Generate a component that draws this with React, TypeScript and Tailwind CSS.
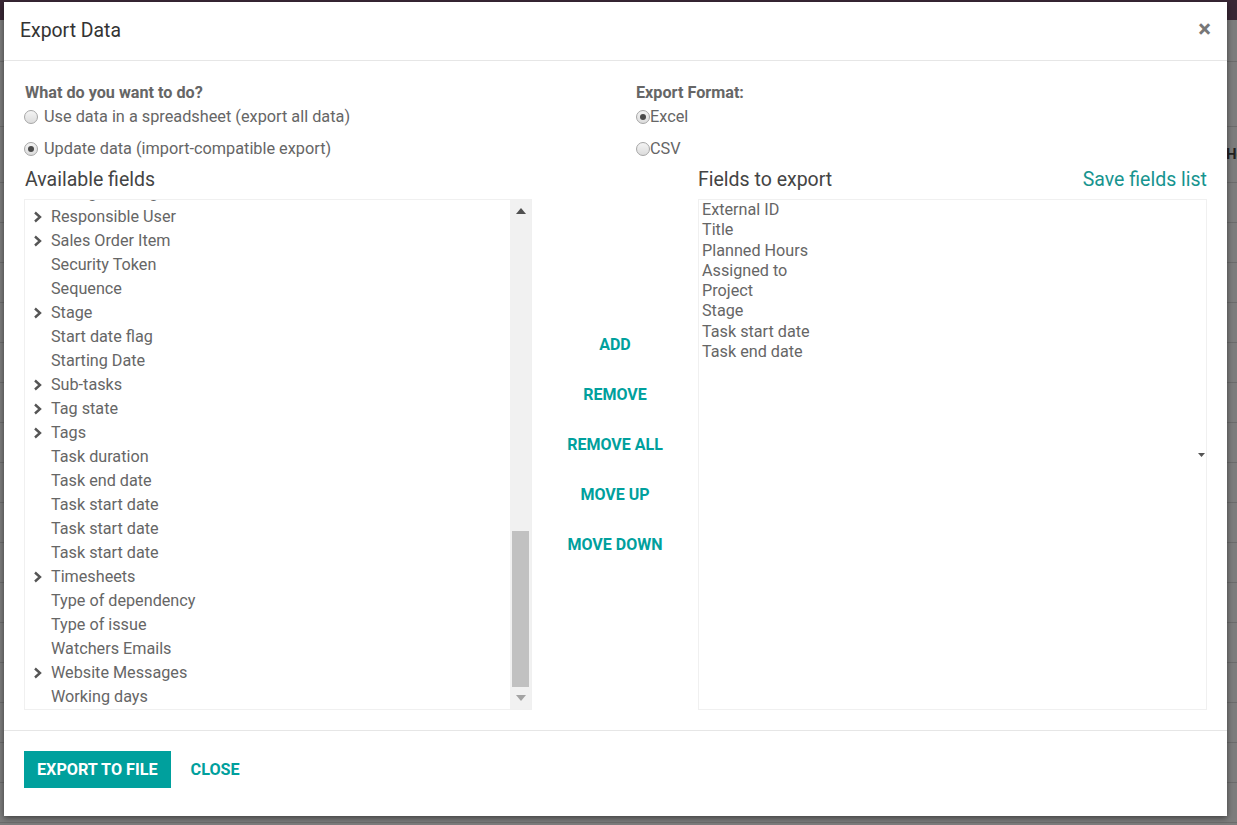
import React from 'react';

const availableFields: { name: string; expandable?: boolean }[] = [
    { name: 'Rating Message', expandable: true },
    { name: 'Responsible User', expandable: true },
    { name: 'Sales Order Item', expandable: true },
    { name: 'Security Token' },
    { name: 'Sequence' },
    { name: 'Stage', expandable: true },
    { name: 'Start date flag' },
    { name: 'Starting Date' },
    { name: 'Sub-tasks', expandable: true },
    { name: 'Tag state', expandable: true },
    { name: 'Tags', expandable: true },
    { name: 'Task duration' },
    { name: 'Task end date' },
    { name: 'Task start date' },
    { name: 'Task start date' },
    { name: 'Task start date' },
    { name: 'Timesheets', expandable: true },
    { name: 'Type of dependency' },
    { name: 'Type of issue' },
    { name: 'Watchers Emails' },
    { name: 'Website Messages', expandable: true },
    { name: 'Working days' },
];

const exportFields = [
    'External ID',
    'Title',
    'Planned Hours',
    'Assigned to',
    'Project',
    'Stage',
    'Task start date',
    'Task end date',
];

const Radio: React.FC<{ checked?: boolean }> = ({ checked }) => (
    <span className="w-[14px] h-[14px] rounded-full border border-[#a6a6a6] bg-gradient-to-b from-[#f4f4f4] to-[#dcdcdc] flex items-center justify-center shrink-0">
        {checked && <span className="w-[6px] h-[6px] rounded-full bg-[#4a4a4a]" />}
    </span>
);

const Chevron = () => (
    <svg width="10" height="12" viewBox="0 0 10 12" className="text-[#555]">
        <path d="M2 1.5 L7 6 L2 10.5" fill="none" stroke="currentColor" strokeWidth="2.4" />
    </svg>
);

const ActionButton: React.FC<{ label: string }> = ({ label }) => (
    <button className="h-[36px] text-[16px] font-bold text-[#00a09d] uppercase">{label}</button>
);

export default function App() {
    return (
        <div className="relative w-[1237px] h-[825px] overflow-hidden bg-[#7d7d7d]" style={{ fontFamily: 'Roboto, "Noto Sans", sans-serif' }}>
            {/* page behind the backdrop */}
            <div className="h-[20px] bg-[#3a2836]" />
            <div className="h-[42px] border-b border-[#6c6c6c]" />
            <div className="h-[65px] border-b border-[#6c6c6c]" />
            <div className="h-[56px] border-b border-[#6c6c6c] flex items-center justify-end">
                <span className="w-[11px] overflow-hidden whitespace-nowrap text-[15px] font-bold text-[#222]">Ho</span>
            </div>
            {Array.from({ length: 16 }).map((_, i) => (
                <div key={i} className="h-[40px] border-b border-[#6c6c6c]" />
            ))}

            {/* modal */}
            <div className="absolute left-[4px] top-[2px] w-[1223px] h-[814px] bg-white shadow-[0_2px_6px_rgba(0,0,0,0.5)] flex flex-col">
                <div className="h-[59px] shrink-0 border-b border-[#e6e6e6] flex items-center justify-between pl-[16px] pr-[16px]">
                    <h4 className="text-[19.4px] text-[#333]">Export Data</h4>
                    <button className="text-[24px] leading-none font-bold text-[#777] -mt-[4px]">×</button>
                </div>

                <div className="flex-1 px-[20px] pt-[21px] pb-[20px] text-[#666] flex flex-col border-b border-[#e6e6e6]">
                    <div className="flex">
                        <div className="w-[612px]">
                            <div className="h-[22px] leading-[22px] text-[16.2px] font-bold pl-[1px]">What do you want to do?</div>
                            <label className="h-[24px] mt-[1px] flex items-center gap-[6px] text-[16.3px]">
                                <Radio />
                                <span>Use data in a spreadsheet (export all data)</span>
                            </label>
                            <label className="h-[24px] mt-[8px] flex items-center gap-[6px] text-[16.3px]">
                                <Radio checked />
                                <span>Update data (import-compatible export)</span>
                            </label>
                        </div>
                        <div className="flex-1">
                            <div className="h-[22px] leading-[22px] text-[16.2px] font-bold">Export Format:</div>
                            <label className="h-[24px] mt-[1px] flex items-center text-[16.3px]">
                                <Radio checked />
                                <span>Excel</span>
                            </label>
                            <label className="h-[24px] mt-[8px] flex items-center text-[16.3px]">
                                <Radio />
                                <span>CSV</span>
                            </label>
                        </div>
                    </div>

                    <div className="flex mt-[4px]">
                        {/* available fields */}
                        <div className="w-[508px] flex flex-col">
                            <div className="h-[30px] leading-[30px] text-[19.5px] text-[#444] pl-[1px]">Available fields</div>
                            <div className="mt-[4px] h-[511px] border border-[#f0f0f0] flex">
                                <div className="flex-1 overflow-hidden flex flex-col justify-end">
                                    {availableFields.map((f, i) => (
                                        <div key={i} className="h-[24px] shrink-0 flex items-center text-[16.2px] whitespace-nowrap">
                                            <span className="w-[26px] pl-[8px] flex items-center">{f.expandable && <Chevron />}</span>
                                            <span>{f.name}</span>
                                        </div>
                                    ))}
                                </div>
                                <div className="w-[21px] bg-[#f1f1f1] flex flex-col items-center">
                                    <div className="h-[22px] flex items-center justify-center">
                                        <svg width="10" height="6" viewBox="0 0 10 6"><path d="M0 6 L5 0 L10 6 Z" fill="#505050" /></svg>
                                    </div>
                                    <div className="flex-1" />
                                    <div className="h-[156px] w-[17px] bg-[#c1c1c1]" />
                                    <div className="h-[22px] flex items-center justify-center">
                                        <svg width="10" height="6" viewBox="0 0 10 6"><path d="M0 0 L10 0 L5 6 Z" fill="#a3a3a3" /></svg>
                                    </div>
                                </div>
                            </div>
                        </div>

                        {/* actions */}
                        <div className="w-[166px] pt-[162px] flex flex-col items-center gap-[14px]">
                            <ActionButton label="Add" />
                            <ActionButton label="Remove" />
                            <ActionButton label="Remove all" />
                            <ActionButton label="Move up" />
                            <ActionButton label="Move down" />
                        </div>

                        {/* fields to export */}
                        <div className="flex-1 flex flex-col">
                            <div className="h-[30px] flex items-center justify-between text-[19.5px]">
                                <span className="text-[#444]">Fields to export</span>
                                <a className="text-[#17948f]">Save fields list</a>
                            </div>
                            <div className="mt-[4px] h-[511px] border border-[#f0f0f0] flex items-center">
                                <div className="self-stretch flex-1 pl-[3px]">
                                    {exportFields.map((f, i) => (
                                        <div key={i} className="h-[20.3px] leading-[20.3px] text-[16.2px] whitespace-nowrap">{f}</div>
                                    ))}
                                </div>
                                <svg width="7" height="4" viewBox="0 0 7 4" className="mr-[1px]"><path d="M0 0 L7 0 L3.5 4 Z" fill="#555" /></svg>
                            </div>
                        </div>
                    </div>
                </div>

                <div className="h-[86px] shrink-0 px-[20px] pt-[20px] flex items-start gap-[20px]">
                    <button className="h-[37px] px-[13px] pt-[1px] bg-[#00a09d] text-white text-[16.2px] font-bold uppercase">Export to file</button>
                    <button className="h-[37px] pt-[1px] text-[16.2px] font-bold text-[#00a09d] uppercase">Close</button>
                </div>
            </div>
        </div>
    );
}
